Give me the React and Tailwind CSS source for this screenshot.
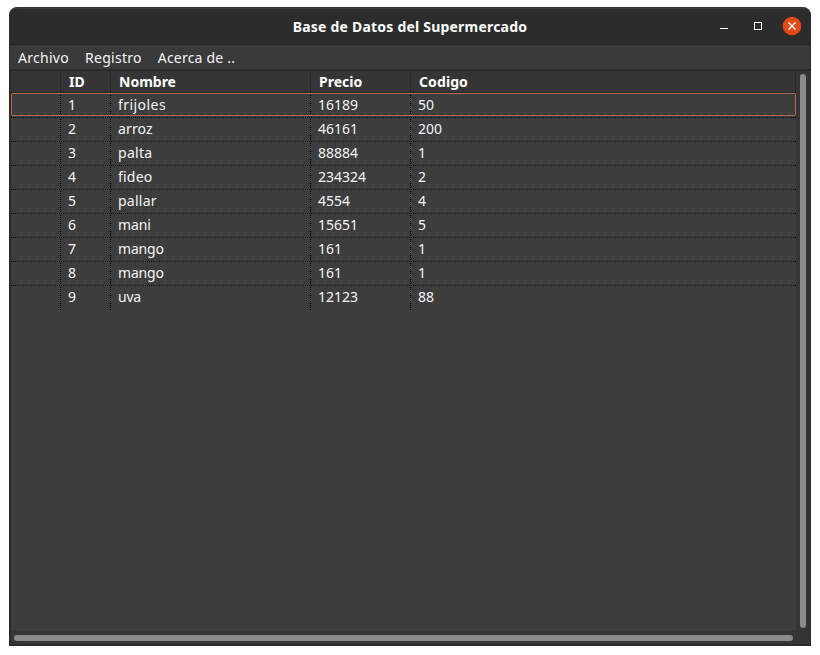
const rows = [
  { cells: ["1", "frijoles", "16189", "50"], tracking: "tracking-[0.45px]" },
  { cells: ["2", "arroz", "46161", "200"], tracking: "tracking-[0.15px]" },
  { cells: ["3", "palta", "88884", "1"], tracking: "tracking-[0.3px]" },
  { cells: ["4", "fideo", "234324", "2"], tracking: "tracking-[0.2px]" },
  { cells: ["5", "pallar", "4554", "4"], tracking: "tracking-[0.25px]" },
  { cells: ["6", "mani", "15651", "5"], tracking: "tracking-[-0.1px]" },
  { cells: ["7", "mango", "161", "1"], tracking: "tracking-[-0.2px]" },
  { cells: ["8", "mango", "161", "1"], tracking: "tracking-[-0.2px]" },
  { cells: ["9", "uva", "12123", "88"], tracking: "tracking-[-0.2px]" },
];

const columns = "grid grid-cols-[50px_50px_200px_100px_1fr]";
const dotsFirst =
  "bg-[repeating-linear-gradient(to_bottom,#000_0_1px,transparent_1px_2px)] bg-[length:1px_100%] bg-no-repeat bg-right";
const dotsRest =
  "bg-[repeating-linear-gradient(to_bottom,transparent_0_1px,#000_1px_2px)] bg-[length:1px_100%] bg-no-repeat bg-right";
const dotsH =
  "h-px bg-[repeating-linear-gradient(to_right,#000_0_1px,transparent_1px_2px)]";

function TitleBar() {
  return (
    <header className="grid h-[37px] shrink-0 grid-cols-[1fr_auto_1fr] items-center border-t border-b border-t-[#3d3d3d] border-b-[#232323] bg-[#2c2c2c]">
      <span />
      <h1 className="text-[14px] leading-5 font-bold tracking-[0.21px] text-white">
        Base de Datos del Supermercado
      </h1>
      <div className="flex items-center justify-end pr-[9px] pb-px">
        <svg width="84" height="20" viewBox="0 0 84 20">
          <rect x="3" y="12" width="8" height="1" fill="#fff" />
          <rect x="37.5" y="6.5" width="7" height="7" fill="none" stroke="#fff" />
          <circle cx="75" cy="10" r="9.3" fill="#df4a16" />
          <path d="M71.5 6.5l7 7M78.5 6.5l-7 7" stroke="#fff" strokeWidth="1.4" />
        </svg>
      </div>
    </header>
  );
}

function Row({ cells, tracking, selected, last }) {
  const dotsV = selected ? dotsFirst : dotsRest;
  return (
    <div className={selected ? "relative h-[25px]" : "h-6"}>
      <div className={`${columns} ${selected || last ? "h-6" : "h-[23px]"}`}>
        <span className={dotsV} />
        {cells.map((cell, i) => (
          <span
            key={i}
            className={`pl-[7px] ${selected ? "leading-[24px]" : "leading-[22px]"} ${i < 3 ? dotsV : ""} ${i === 1 ? tracking : ""}`}
          >
            {cell}
          </span>
        ))}
      </div>
      {!last && <div className={dotsH} />}
      {selected && (
        <div className="absolute inset-x-0 top-0 h-[23px] rounded-[2px] border border-[#b06b50]" />
      )}
    </div>
  );
}

export default function App() {
  return (
    <div className="h-[655px] w-[820px] overflow-hidden bg-white pt-[7px] pl-[9px] font-['Noto_Sans',sans-serif] text-[14px] text-[#f5f5f5]">
      <div className="flex h-[639px] w-[802px] flex-col overflow-hidden rounded-t-[8px] border border-b-2 border-[#2b2b2b] border-t-[#333] bg-[#353535]">
        <TitleBar />
        <nav className="flex h-6 shrink-0 gap-4 bg-[#3a3a3a] pl-2 leading-[26px] tracking-[0.28px]">
          <span>Archivo</span>
          <span>Registro</span>
          <span className="tracking-[0.2px]">Acerca de ..</span>
        </nav>
        <main className="flex min-h-0 flex-1 border-t-2 border-l border-[#2a2a2a]">
          <div className="flex w-[785px] flex-col">
            <div className={`${columns} h-[22px] shrink-0 border-r border-b border-[#2a2a2a] bg-[#353535] leading-[22px] font-bold text-white`}>
              <span className="border-r border-[#2a2a2a]" />
              <span className="border-r border-[#2a2a2a] pl-2">ID</span>
              <span className="border-r border-[#2a2a2a] pl-2">Nombre</span>
              <span className="border-r border-[#2a2a2a] pl-2">Precio</span>
              <span className="pl-2 tracking-[0.1px]">Codigo</span>
            </div>
            <div className="flex-1 bg-[#3d3d3d]">
              {rows.map((row, i) => (
                <Row key={i} {...row} selected={i === 0} last={i === rows.length - 1} />
              ))}
            </div>
            <div className="h-[13px] shrink-0 pt-1 pl-[3px]">
              <div className="h-1.5 w-[779px] rounded-full bg-[#8b8b8b]" />
            </div>
          </div>
          <div className="flex-1 pt-[3px] pl-1">
            <div className="h-[554px] w-1.5 rounded-full bg-[#8b8b8b]" />
          </div>
        </main>
      </div>
    </div>
  );
}
